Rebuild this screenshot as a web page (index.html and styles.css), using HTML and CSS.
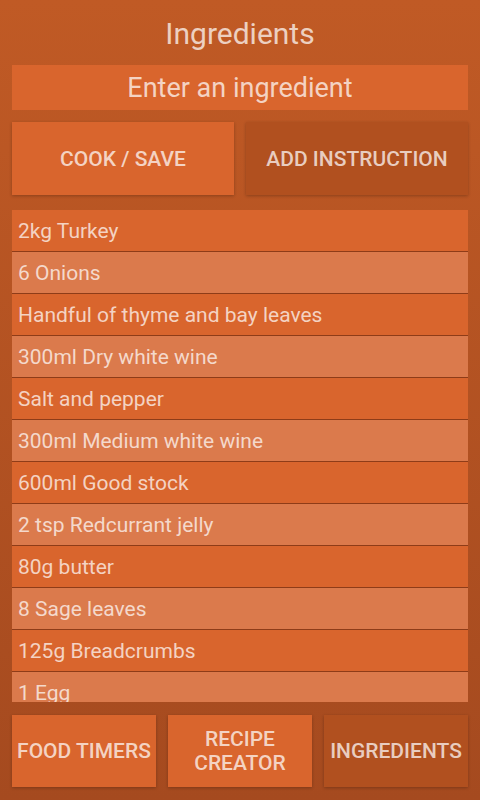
FILE: index.html
```html
<!DOCTYPE html>
<html lang="en">
<head>
  <meta charset="UTF-8">
  <meta name="viewport" content="width=device-width, initial-scale=1.0">
  <title>Ingredients</title>
  <link rel="stylesheet" href="styles.css">
</head>
<body>

  <div class="screen">
    <h1 class="title">Ingredients</h1>

    <input class="entry" type="text" placeholder="Enter an ingredient">

    <div class="actions">
      <button class="btn">Cook / Save</button>
      <button class="btn btn-dark">Add Instruction</button>
    </div>

    <ul class="list">
      <li>2kg Turkey</li>
      <li>6 Onions</li>
      <li>Handful of thyme and bay leaves</li>
      <li>300ml Dry white wine</li>
      <li>Salt and pepper</li>
      <li>300ml Medium white wine</li>
      <li>600ml Good stock</li>
      <li>2 tsp Redcurrant jelly</li>
      <li>80g butter</li>
      <li>8 Sage leaves</li>
      <li>125g Breadcrumbs</li>
      <li>1 Egg</li>
    </ul>

    <div class="tabs">
      <button class="btn">Food Timers</button>
      <button class="btn">Recipe<br>Creator</button>
      <button class="btn btn-dark">Ingredients</button>
    </div>
  </div>

</body>
</html>
```

FILE: styles.css
```css
html, body {
  height: 100%;
}

body {
  margin: 0;
  font-family: 'Roboto', 'Liberation Sans', sans-serif;
  background: linear-gradient(#c05a25, #a54a1f);
  color: rgba(255, 255, 255, 0.72);
}

.screen {
  display: flex;
  flex-direction: column;
  height: 800px;
  padding: 0 12px 13px;
  box-sizing: border-box;
}

.title {
  margin: 0;
  height: 65px;
  line-height: 68px;
  text-align: center;
  font-size: 30px;
  font-weight: 400;
}

.entry {
  height: 45px;
  border: none;
  margin: 0;
  padding: 0;
  background-color: #d9652d;
  font-family: inherit;
  font-size: 27px;
  text-align: center;
  color: #fff;
  outline: none;
}

.entry::placeholder {
  color: rgba(255, 255, 255, 0.72);
}

.actions {
  display: grid;
  grid-template-columns: 1fr 1fr;
  gap: 12px;
  margin-top: 12px;
  height: 73px;
}

.btn {
  border: none;
  margin: 0;
  padding: 0;
  background-color: #d9652d;
  color: rgba(255, 255, 255, 0.72);
  font-family: inherit;
  font-size: 21px;
  font-weight: 500;
  line-height: 24px;
  text-transform: uppercase;
  box-shadow: 0 1px 3px rgba(0, 0, 0, 0.25);
  cursor: pointer;
}

.btn-dark {
  background-color: #b1501f;
}

.list {
  list-style: none;
  margin: 15px 0 0;
  padding: 0;
  height: 492px;
  overflow: hidden;
}

.list li {
  height: 41px;
  line-height: 42px;
  padding-left: 6px;
  font-size: 21px;
  background-color: #d9652d;
  border-bottom: 1px solid #8e3c18;
  white-space: nowrap;
}

.list li:nth-child(even) {
  background-color: #db7a4c;
}

.tabs {
  display: grid;
  grid-template-columns: 1fr 1fr 1fr;
  gap: 12px;
  margin-top: 13px;
  height: 72px;
}
```
